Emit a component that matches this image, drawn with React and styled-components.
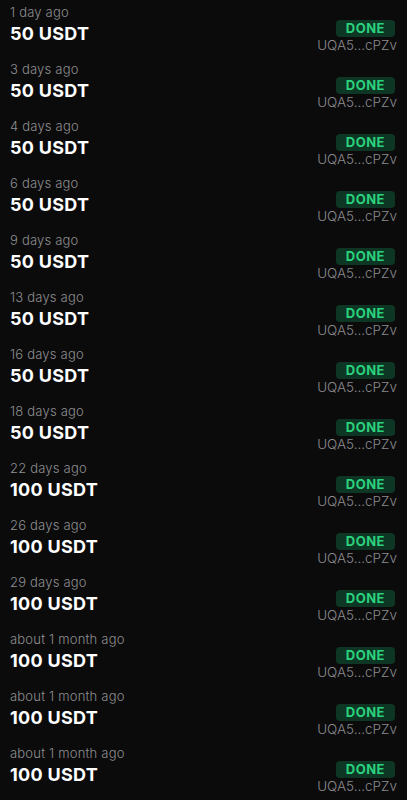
import styled, { createGlobalStyle } from "styled-components";

const rows = [
  ["1 day ago", "50 USDT"],
  ["3 days ago", "50 USDT"],
  ["4 days ago", "50 USDT"],
  ["6 days ago", "50 USDT"],
  ["9 days ago", "50 USDT"],
  ["13 days ago", "50 USDT"],
  ["16 days ago", "50 USDT"],
  ["18 days ago", "50 USDT"],
  ["22 days ago", "100 USDT"],
  ["26 days ago", "100 USDT"],
  ["29 days ago", "100 USDT"],
  ["about 1 month ago", "100 USDT"],
  ["about 1 month ago", "100 USDT"],
  ["about 1 month ago", "100 USDT"],
];

export default function App() {
  return (
    <>
      <GlobalStyle />
      <List>
        {rows.map(([time, amount], i) => (
          <Row key={i}>
            <Left>
              <Time>{time}</Time>
              <Amount>{amount}</Amount>
            </Left>
            <Right>
              <Status>DONE</Status>
              <Address>UQA5...cPZv</Address>
            </Right>
          </Row>
        ))}
      </List>
    </>
  );
}

const GlobalStyle = createGlobalStyle`
  body {
    margin: 0;
    background: #0b0b0c;
    font-family: Inter, "Noto Sans", sans-serif;
  }
`;

const List = styled.main`
  display: flex;
  flex-direction: column;
  height: 800px;
  overflow: hidden;
`;

const Row = styled.div`
  display: flex;
  justify-content: space-between;
  height: 57px;
  flex-shrink: 0;
  padding: 0 10px;
`;

const Left = styled.div`
  display: flex;
  flex-direction: column;
  padding-top: 4px;
  gap: 3px;
`;

const Time = styled.span`
  font-size: 13px;
  line-height: 16px;
  font-weight: 300;
  letter-spacing: 0.2px;
  color: #8e8e90;
`;

const Amount = styled.span`
  font-size: 18px;
  line-height: 22px;
  font-weight: 700;
  letter-spacing: 0.3px;
  color: #ffffff;
`;

const Right = styled.div`
  display: flex;
  flex-direction: column;
  align-items: flex-end;
  padding-top: 20px;
`;

const Status = styled.span`
  font-size: 13px;
  line-height: 17px;
  font-weight: 700;
  color: #2bd27e;
  background: #0e3624;
  border-radius: 4px;
  padding: 0 10px;
  margin-right: 2px;
  letter-spacing: 0.5px;
`;

const Address = styled.span`
  font-size: 13.5px;
  line-height: 16px;
  font-weight: 300;
  color: #8a8a8c;
`;
